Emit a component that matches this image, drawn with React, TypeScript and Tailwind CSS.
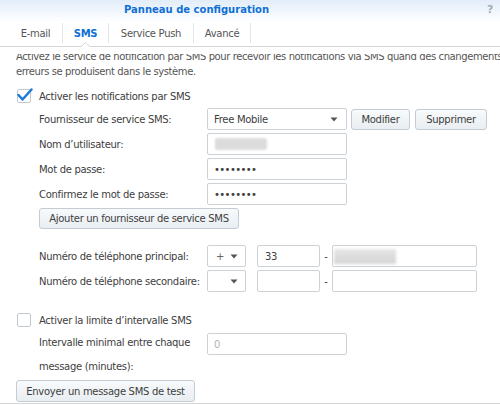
import type { ReactNode } from 'react'

const tabs = [
  { label: 'E-mail', active: false, width: 'w-[53px]' },
  { label: 'SMS', active: true, width: 'w-[45px]' },
  { label: 'Service Push', active: false, width: 'w-[84px]' },
  { label: 'Avancé', active: false, width: 'w-[56px]' },
]

function Caret() {
  return (
    <svg width="8" height="5" viewBox="0 0 8 5" className="shrink-0">
      <path d="M0.5 0.5 L7.5 0.5 L4 4.5 Z" fill="#555" />
    </svg>
  )
}

function Btn({ children, className = '' }: { children: ReactNode; className?: string }) {
  return (
    <button
      className={`flex h-[21px] items-center justify-center rounded-[3px] border border-[#c4cbd2] bg-gradient-to-b from-[#f8fafb] to-[#e9eef2] text-[#404040] ${className}`}
    >
      {children}
    </button>
  )
}

function Field({ children, className = '' }: { children?: ReactNode; className?: string }) {
  return (
    <div
      className={`flex h-[22px] items-center rounded-[2px] border border-[#cdd2d7] bg-white px-[6px] ${className}`}
    >
      {children}
    </div>
  )
}

function Checkbox({ checked }: { checked: boolean }) {
  return (
    <span className="relative block h-[14px] w-[14px] shrink-0 rounded-[2px] border border-[#c3c9cf] bg-white">
      {checked && (
        <svg
          width="16"
          height="14"
          viewBox="0 0 16 14"
          className="absolute -left-[1px] -top-[2px]"
        >
          <path
            d="M1.5 7 L5.5 11.5 L14.5 1.5"
            fill="none"
            stroke="#1a78d8"
            strokeWidth="2.4"
            strokeLinecap="round"
            strokeLinejoin="round"
          />
        </svg>
      )}
    </span>
  )
}

function Row({ label, children }: { label: ReactNode; children: ReactNode }) {
  return (
    <div className="flex h-[22px] items-center">
      <span className="w-[168px] shrink-0 whitespace-nowrap">{label}</span>
      {children}
    </div>
  )
}

export default function App() {
  return (
    <div className="h-[405px] w-[500px] overflow-hidden bg-white font-['DejaVu_Sans',sans-serif] text-[10px] tracking-[-0.3px] text-[#404040]">
      {/* Title bar */}
      <header className="relative h-[22px] bg-gradient-to-b from-[#e2edf9] to-white">
        <h1 className="pl-[124px] pt-[3px] text-[10px] font-bold leading-[14px] tracking-normal text-[#0f6fd6]">
          Panneau de configuration
        </h1>
        <span className="absolute right-[7px] top-[2px] text-[11px] font-bold text-[#a3acb5]">?</span>
      </header>

      {/* Tabs */}
      <nav className="relative flex h-[25px] border-b border-[#d3d6da] pl-[9px]">
        {tabs.map((t, i) => (
          <div key={t.label} className="flex">
            {i > 0 && <span className="mt-[1px] h-[20px] w-px bg-[#e2e5e8]" />}
            <span
              className={
                t.active
                  ? `flex items-center justify-center pb-[2px] font-bold text-[#0f6fd6] ${t.width}`
                  : `flex items-center justify-center pb-[2px] text-[#555] ${t.width}`
              }
            >
              {t.label}
            </span>
          </div>
        ))}
        <span className="mt-[1px] h-[20px] w-px bg-[#e2e5e8]" />
        <svg width="9" height="5" viewBox="0 0 9 5" className="absolute bottom-[-1px] left-[81px]">
          <path d="M0 5 L4.5 0.5 L9 5 Z" fill="#fff" />
          <path d="M0 4.5 L4.5 0.5 L9 4.5" fill="none" stroke="#d3d6da" strokeWidth="1" />
        </svg>
      </nav>

      {/* Scrolled content */}
      <div className="mt-[7px] h-[350px] overflow-hidden border-b border-[#d3d6da]">
        <div className="-mt-[5px] pl-[16px]">
          <p className="whitespace-nowrap leading-[15px] tracking-[-0.4px] text-[#555]">
            Activez le service de notification par SMS pour recevoir les notifications via SMS quand des changements
            <br />
            erreurs se produisent dans le système.
          </p>

          <label className="mt-[10px] flex h-[14px] items-center gap-[8px] pl-px">
            <Checkbox checked />
            <span>Activer les notifications par SMS</span>
          </label>

          <div className="mt-[5px] flex flex-col gap-[3px] pl-[23px]">
            <Row label="Fournisseur de service SMS:">
              <Field className="w-[140px] justify-between pr-[8px]">
                <span>Free Mobile</span>
                <Caret />
              </Field>
              <Btn className="ml-[4px] w-[59px]">Modifier</Btn>
              <Btn className="ml-[5px] w-[72px]">Supprimer</Btn>
            </Row>
            <Row label="Nom d’utilisateur:">
              <Field className="w-[140px] pl-[7px]">
                <span className="h-[12px] w-[52px] rounded-[2px] bg-[#dcdcdc] blur-[1px]" />
              </Field>
            </Row>
            <Row label="Mot de passe:">
              <Field className="w-[140px] tracking-[-0.6px]">••••••••</Field>
            </Row>
            <Row label="Confirmez le mot de passe:">
              <Field className="w-[140px] tracking-[-0.6px]">••••••••</Field>
            </Row>
            <Btn className="w-[200px]">Ajouter un fournisseur de service SMS</Btn>

            <div className="mt-[13px]">
              <Row label="Numéro de téléphone principal:">
                <Field className="w-[39px] justify-between pl-[8px] pr-[7px]">
                  <span className="text-[#666]">+</span>
                  <Caret />
                </Field>
                <Field className="ml-[11px] w-[63px] pl-[7px]">33</Field>
                <span className="w-[12px] text-center">-</span>
                <Field className="w-[145px] pl-[1px]">
                  <span className="h-[15px] w-[62px] bg-gradient-to-b from-[#e6e6e6] to-[#d4d4d4] blur-[1.5px]" />
                </Field>
              </Row>
            </div>
            <Row label="Numéro de téléphone secondaire:">
              <Field className="w-[39px] justify-end pr-[7px]">
                <Caret />
              </Field>
              <Field className="ml-[11px] w-[63px]" />
              <span className="w-[12px] text-center">-</span>
              <Field className="w-[145px]" />
            </Row>
          </div>

          <label className="mt-[21px] flex h-[14px] items-center gap-[8px] pl-px">
            <Checkbox checked={false} />
            <span>Activer la limite d’intervalle SMS</span>
          </label>

          <div className="mt-[4px] flex pl-[23px]">
            <span className="w-[168px] shrink-0 leading-[24px]">
              Intervalle minimal entre chaque
              <br />
              message (minutes):
            </span>
            <Field className="mt-[2px] w-[140px] bg-[#f4f6f8] text-[#b5b5b5]">0</Field>
          </div>

          <Btn className="mt-px h-[22px] w-[179px]">Envoyer un message SMS de test</Btn>
        </div>
      </div>
    </div>
  )
}
